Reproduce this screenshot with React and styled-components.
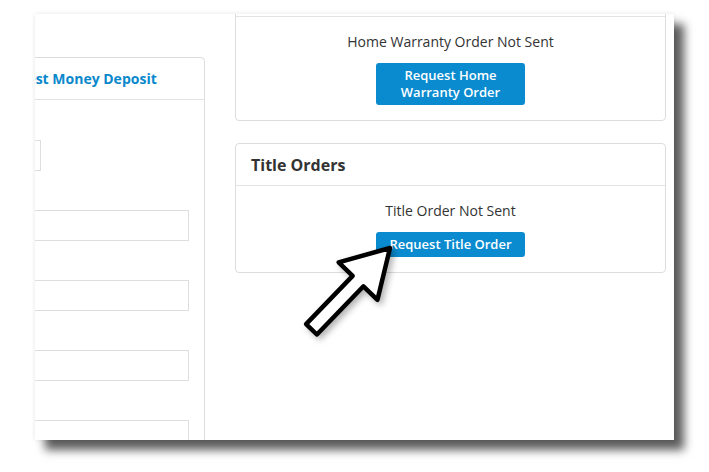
import React from 'react';
import styled, { createGlobalStyle } from 'styled-components';

const GlobalStyle = createGlobalStyle`
  html, body {
    margin: 0;
    padding: 0;
    background: #ffffff;
  }
  body {
    font-family: "Open Sans", "Liberation Sans", sans-serif;
    color: #333333;
  }
`;

const Page = styled.div`
  width: 709px;
  height: 472px;
  padding: 14px 0 0 35px;
  box-sizing: border-box;
`;

const Screen = styled.div`
  position: relative;
  width: 639px;
  height: 426px;
  background: #ffffff;
  overflow: hidden;
  display: flex;
  align-items: flex-start;
  box-shadow: 10px 10px 9px rgba(0, 0, 0, 0.64), 0 0 4px rgba(0, 0, 0, 0.1);
`;

const LeftCol = styled.div`
  flex: 0 0 290px;
  min-width: 0;
  margin-left: -120px;
  padding-top: 43px;
`;

const RightCol = styled.div`
  flex: 0 0 431px;
  min-width: 0;
  margin-left: 30px;
  display: flex;
  flex-direction: column;
  gap: 22px;
`;

const Card = styled.section`
  border: 1px solid #dddddd;
  border-radius: 4px;
  background: #ffffff;
  margin-top: ${p => p.$offset || 0}px;
  height: ${p => (p.$tall ? '500px' : 'auto')};
`;

const CardHeader = styled.div`
  height: 41px;
  border-bottom: 1px solid #e3e3e3;
  display: flex;
  align-items: center;
  padding: 0 15px 0 ${p => p.$indent || 15}px;
`;

const CardTitle = styled.h3`
  margin: 0;
  font-size: ${p => (p.$link ? '14px' : '16px')};
  font-weight: 700;
  color: ${p => (p.$link ? '#0a88cc' : '#333333')};
  line-height: 20px;
  white-space: nowrap;
`;

const CardBody = styled.div`
  padding: 15px;
  display: flex;
  flex-direction: column;
  align-items: ${p => (p.$center ? 'center' : 'stretch')};
`;

const Status = styled.p`
  margin: 0 0 11px;
  font-size: 14px;
  line-height: 20px;
  color: #333333;
  text-align: center;
`;

const OrderButton = styled.button`
  width: 149px;
  min-height: 25px;
  padding: ${p => (p.$wrap ? '4px 12px' : '0 6px')};
  border: none;
  border-radius: 3px;
  background: #0a8bd0;
  color: #ffffff;
  font-family: "Open Sans", "Liberation Sans", sans-serif;
  font-size: 13px;
  font-weight: 600;
  line-height: 17px;
  text-align: center;
`;

const Field = styled.div`
  margin-top: ${p => p.$gap}px;
  width: ${p => p.$width}px;
  max-width: 100%;
  height: 31px;
  border: 1px solid #dedede;
  box-sizing: border-box;
  background: #ffffff;
`;

const Arrow = styled.svg`
  position: absolute;
  left: 250px;
  top: 225px;
  width: 120px;
  height: 120px;
  overflow: visible;
  filter: drop-shadow(3px 3px 3px rgba(0, 0, 0, 0.3));
`;

export default function App() {
  return (
    <>
      <GlobalStyle />
      <Page>
        <Screen>
          <LeftCol>
            <Card $tall>
              <CardHeader $indent={19}>
                <CardTitle $link>Request Earnest Money Deposit</CardTitle>
              </CardHeader>
              <CardBody>
                <Field $gap={25} $width={110} />
                <Field $gap={39} $width={258} />
                <Field $gap={39} $width={258} />
                <Field $gap={39} $width={258} />
                <Field $gap={39} $width={258} />
              </CardBody>
            </Card>
          </LeftCol>

          <RightCol>
            <Card $offset={-40}>
              <CardHeader />
              <CardBody $center>
                <Status>Home Warranty Order Not Sent</Status>
                <OrderButton $wrap>Request Home Warranty Order</OrderButton>
              </CardBody>
            </Card>

            <Card>
              <CardHeader>
                <CardTitle>Title Orders</CardTitle>
              </CardHeader>
              <CardBody $center>
                <Status>Title Order Not Sent</Status>
                <OrderButton>Request Title Order</OrderButton>
              </CardBody>
            </Card>
          </RightCol>

          <Arrow viewBox="0 0 120 120">
            <path
              transform="translate(105 9) rotate(44)"
              d="M0 0 L27 46 L7.5 46 L7.5 113 L-7.5 113 L-7.5 46 L-27 46 Z"
              fill="#ffffff"
              stroke="#000000"
              strokeWidth="4.5"
              strokeLinejoin="round"
            />
          </Arrow>
        </Screen>
      </Page>
    </>
  );
}
